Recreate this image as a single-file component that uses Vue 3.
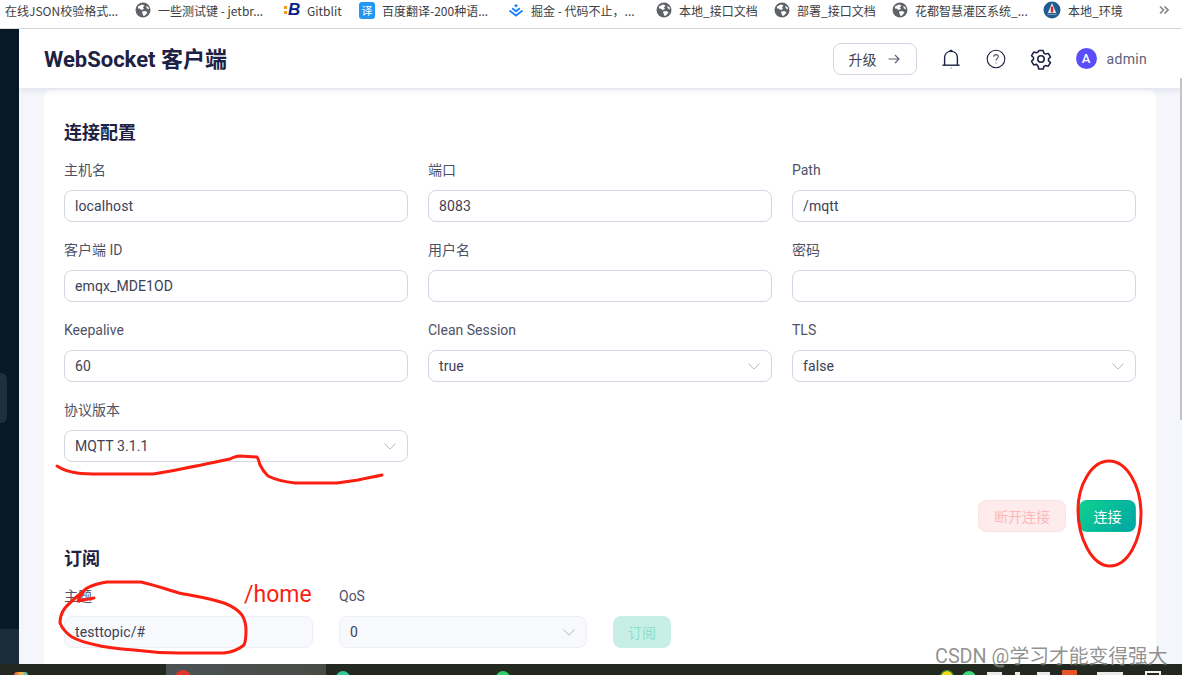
<template>
  <div class="app">
    <div class="bookmarks">
      <div v-for="b in bookmarks" :key="b.text" class="bookmark" :style="{ width: b.width + 'px' }">
        <svg v-if="b.icon === 'globe'" class="fav" viewBox="0 0 16 16">
          <circle cx="8" cy="8" r="7.5" fill="#5f6368" />
          <path d="M3 4.5 7 2.5 9.5 3.5 8 5.5 9 7 6.5 8 4.5 6.5 3 6.5Z M7 9.5 10.5 9 12.5 10.5 10 13.5 8.5 14 7.5 11.5Z M11 4 13.5 5 14 7.5 12 6.5Z" fill="#fff" />
        </svg>
        <span v-else-if="b.icon === 'gitblit'" class="fav-gitblit">
          <span class="dots"><i></i><i></i></span><b>B</b>
        </span>
        <span v-else-if="b.icon === 'fanyi'" class="fav-fanyi">译</span>
        <svg v-else-if="b.icon === 'juejin'" class="fav" viewBox="0 0 16 16">
          <path d="M8 2 10 3.7 8 5.4 6 3.7Z" fill="#1e80ff" />
          <path d="M4.2 6.2 8 9.2 11.8 6.2 M1.4 8.4 8 13.6 14.6 8.4" fill="none" stroke="#1e80ff" stroke-width="1.9" />
        </svg>
        <svg v-else-if="b.icon === 'logo'" class="fav fav-lg" viewBox="0 0 18 18">
          <circle cx="9" cy="9" r="8.5" fill="#1f5c8f" />
          <path d="M9 2 14 14H4Z" fill="#e8eef3" />
          <rect x="7.8" y="5.5" width="2.4" height="6" fill="#d92b2b" />
          <rect x="2.5" y="12" width="13" height="1.6" fill="#1f5c8f" />
        </svg>
        <span class="bookmark-text">{{ b.text }}</span>
      </div>
      <svg class="more" viewBox="0 0 10 10" fill="none" stroke="#80858a" stroke-width="1.6">
        <path d="M1 1.500 4.500 5 1 8.500M5.500 1.500 9 5 5.500 8.500" />
      </svg>
    </div>

    <div class="body">
      <aside class="sidebar">
        <div class="side-handle"></div>
        <div class="side-foot"></div>
      </aside>

      <main class="main">
        <header class="topbar">
          <h1>WebSocket 客户端</h1>
          <div class="top-actions">
            <button class="upgrade">
              升级
              <svg width="14" height="14" viewBox="0 0 14 14" fill="none" stroke="#5c6076" stroke-width="1.1">
                <path d="M1.5 7H12M8 3l4 4-4 4" />
              </svg>
            </button>
            <svg class="top-icon bell" viewBox="0 0 22 22" fill="none" stroke="#1d2143" stroke-width="1.4">
              <path d="M4.6 17V9.8C4.6 6 7.2 3.4 11 3.4S17.4 6 17.4 9.8V17" />
              <path d="M2.4 17.2H19.6" />
              <path d="M10 3.2C10 2.2 12 2.2 12 3.2" />
              <path d="M10.6 20H11.4" stroke="#6f7285" />
            </svg>
            <svg class="top-icon help" viewBox="0 0 22 22" fill="none" stroke="#1d2143" stroke-width="1.1">
              <circle cx="11" cy="11" r="8.8" />
              <path d="M8.7 8.8C8.7 7.4 9.7 6.6 11 6.6S13.3 7.5 13.3 8.7C13.3 10.4 11 10.5 11 12.6" stroke="#55586f" />
              <path d="M11 14.6V15.6" stroke="#55586f" />
            </svg>
            <svg class="top-icon gear" viewBox="0 0 24 24" fill="none" stroke="#1d2143" stroke-width="1.7" stroke-linejoin="round">
              <path d="M9.6 2.5h4.8l.7 2.9 1.9 1.1 2.9-.8 2.4 4.1-2.1 2.2v2l2.1 2.2-2.4 4.1-2.9-.8-1.9 1.1-.7 2.9H9.6l-.7-2.9L7 18l-2.9.8-2.4-4.1 2.1-2.2v-2L1.700 8.300 4.100 4.200 7 5l1.900-1.100Z" transform="translate(0 0.4) scale(1 0.96)" />
              <circle cx="12" cy="12" r="3.500" />
            </svg>
            <span class="avatar">A</span>
            <span class="username">admin</span>
          </div>
        </header>

        <section class="card">
          <h2>连接配置</h2>
          <div class="form-grid">
            <div v-for="f in connFields" :key="f.label" class="field">
              <label>{{ f.label }}</label>
              <div v-if="f.select" class="control">
                <span>{{ f.value }}</span>
                <svg class="chevron" viewBox="0 0 12 7" fill="none" stroke="#b4b6c2" stroke-width="1"><path d="M.5 .5 6 6.200 11.500 .5" /></svg>
              </div>
              <div v-else class="control"><span>{{ f.value }}</span></div>
            </div>
          </div>

          <div class="actions">
            <button class="btn btn-disconnect">断开连接</button>
            <button class="btn btn-connect">连接</button>
          </div>

          <h2 class="sub-title">订阅</h2>
          <div class="sub-row">
            <div class="field sub-topic">
              <label>主题</label>
              <div class="control soft"><span>testtopic/#</span></div>
            </div>
            <div class="field sub-qos">
              <label>QoS</label>
              <div class="control soft">
                <span>0</span>
                <svg class="chevron" viewBox="0 0 12 7" fill="none" stroke="#b4b6c2" stroke-width="1"><path d="M.5 .5 6 6.200 11.500 .5" /></svg>
              </div>
            </div>
            <button class="btn btn-subscribe">订阅</button>
          </div>
        </section>
      </main>
    </div>

    <div class="taskbar">
      <span class="task-start"></span>
      <div class="task-active"><span class="dot red"></span></div>
      <span class="dot teal"></span>
      <span class="dot green"></span>
      <div class="tray">
        <span class="dot tray-yellow"></span>
        <span class="dot tray-green"></span>
        <span class="tray-white tw-a"></span>
        <span class="tray-white tw-b"></span>
        <span class="tray-white tw-c"></span>
        <span class="tray-orange"></span>
        <span class="tray-white tw-d"></span>
        <span class="tray-box"></span>
      </div>
    </div>

    <div class="scroll-thumb"></div>

    <svg class="ink" width="1182" height="675" viewBox="0 0 1182 675" fill="none" stroke="#fb1f12" stroke-width="3" stroke-linecap="round" stroke-linejoin="round">
      <path d="M57 466C63 470 70 472 77 473C85 474 92 474 100 474L153 474C178 470 205 464 230 459C234 457 237 456 240 456L257 457C259 460 259 462 260 465C262 469 265 473 268 476C276 480 285 482 295 483L337 483C344 482 351 481 358 480C366 478 374 477 382 475" />
      <path d="M94 598 78 601C80 596 83 591 87 588C93 585 100 583 107 582L141 582C154 585 166 589 179 593C194 596 210 598 224 603C232 606 238 610 242 615C245 620 246 625 246 630C246 635 246 641 244 645C238 650 232 652 224 653L179 653C164 653 149 652 134 650C121 649 108 648 96 645C87 643 79 641 72 637C66 633 62 628 60 623C60 618 62 612 65 608C71 601 79 595 87 588" />
      <path d="M1109 461C1091 461 1078 486 1078 510C1078 538 1092 566 1110 566C1128 566 1141 540 1141 514C1141 486 1127 461 1109 461Z" />
    </svg>
    <span class="ink-text">/home</span>
    <span class="watermark">CSDN @学习才能变得强大</span>
  </div>
</template>

<script setup>
const bookmarks = [
  { text: '在线JSON校验格式...', width: 130 },
  { icon: 'globe', text: '一些测试键 - jetbr...', width: 149 },
  { icon: 'gitblit', text: 'Gitblit', width: 75 },
  { icon: 'fanyi', text: '百度翻译-200种语...', width: 149 },
  { icon: 'juejin', text: '掘金 - 代码不止，...', width: 148 },
  { icon: 'globe', text: '本地_接口文档', width: 118 },
  { icon: 'globe', text: '部署_接口文档', width: 118 },
  { icon: 'globe', text: '花都智慧灌区系统_...', width: 151 },
  { icon: 'logo', text: '本地_环境', width: 90 },
]

const connFields = [
  { label: '主机名', value: 'localhost' },
  { label: '端口', value: '8083' },
  { label: 'Path', value: '/mqtt' },
  { label: '客户端 ID', value: 'emqx_MDE1OD' },
  { label: '用户名', value: '' },
  { label: '密码', value: '' },
  { label: 'Keepalive', value: '60' },
  { label: 'Clean Session', value: 'true', select: true },
  { label: 'TLS', value: 'false', select: true },
  { label: '协议版本', value: 'MQTT 3.1.1', select: true },
]
</script>

<style>
html, body { margin: 0; overflow: hidden; }
</style>

<style scoped>
.app {
  position: relative;
  display: flex;
  flex-direction: column;
  width: 1182px;
  height: 675px;
  overflow: hidden;
  font-family: Roboto, "Noto Sans CJK SC", sans-serif;
  color: #3d4156;
}

.bookmarks {
  display: flex;
  align-items: center;
  box-sizing: border-box;
  height: 29px;
  padding: 0 0 8px 5px;
  background: #fff;
  border-bottom: 1px solid #d9dbdf;
  font-family: "Noto Sans CJK SC", sans-serif;
  font-size: 12px;
  color: #3c4043;
  flex-shrink: 0;
}
.bookmark {
  display: flex;
  align-items: center;
  gap: 7px;
  white-space: nowrap;
  flex-shrink: 0;
}
.fav { width: 16px; height: 16px; flex-shrink: 0; }
.fav-lg { width: 18px; height: 18px; }
.fav-gitblit {
  display: flex;
  align-items: center;
  width: 16px;
  height: 16px;
  font: italic 900 17px "Liberation Sans", sans-serif;
  color: #0b1f8c;
}
.dots { display: flex; flex-direction: column; gap: 2px; margin-right: 1px; }
.dots i { display: block; width: 3px; height: 3px; background: #f59a12; }
.fav-fanyi {
  width: 16px;
  height: 17px;
  line-height: 17px;
  border-radius: 3px;
  background: #2196f3;
  color: #fff;
  font-size: 11px;
  text-align: center;
}
.more { width: 10px; height: 10px; margin-left: 26px; flex-shrink: 0; }

.body { display: flex; flex: 1; min-height: 0; }

.sidebar {
  display: flex;
  flex-direction: column;
  width: 19px;
  background: #071826;
  flex-shrink: 0;
}
.side-handle {
  width: 7px;
  height: 50px;
  margin-top: 344px;
  background: #1f2f3e;
  border-radius: 0 6px 6px 0;
}
.side-foot { margin-top: auto; height: 35px; background: #1d2c3b; }

.main {
  flex: 1;
  min-width: 0;
  display: flex;
  flex-direction: column;
  background: #f5f6fb;
}

.topbar {
  position: relative;
  display: flex;
  align-items: center;
  justify-content: space-between;
  height: 59px;
  padding: 0 35px 0 25px;
  background: #fff;
  box-shadow: 0 2px 6px rgba(70, 75, 130, 0.12);
  flex-shrink: 0;
}
h1 {
  margin: 0 0 3px;
  font-size: 22px;
  font-weight: 700;
  color: #1d2143;
}
.top-actions { display: flex; align-items: center; }
.upgrade {
  display: flex;
  align-items: center;
  justify-content: center;
  gap: 10px;
  width: 84px;
  height: 32px;
  margin-right: 23px;
  background: #fff;
  border: 1px solid #d5d6e3;
  border-radius: 8px;
  font: 14px Roboto, "Noto Sans CJK SC", sans-serif;
  color: #3d4156;
}
.top-icon { width: 22px; height: 22px; flex-shrink: 0; margin-right: 23px; }
.gear { margin-right: 24px; }
.avatar {
  width: 21px;
  height: 21px;
  line-height: 21px;
  margin-right: 10px;
  border-radius: 50%;
  background: #5b4dfa;
  color: #fff;
  font-size: 13px;
  font-weight: 500;
  text-align: center;
}
.username { font-size: 14px; letter-spacing: 0.3px; color: #5c6076; }

.card {
  flex: 1;
  margin: 2px 26px 0 25px;
  padding: 30px 20px 0;
  background: #fff;
  border-radius: 8px 8px 0 0;
}
h2 {
  margin: 0 0 13px;
  font-size: 18px;
  line-height: 26px;
  font-weight: 700;
  color: #1d2143;
}
.form-grid {
  display: grid;
  grid-template-columns: repeat(3, 344px);
  column-gap: 20px;
  row-gap: 17px;
}
label {
  display: block;
  margin-bottom: 9px;
  font-size: 14px;
  line-height: 22px;
  color: #4e5267;
}
.control {
  display: flex;
  align-items: center;
  justify-content: space-between;
  box-sizing: border-box;
  height: 32px;
  padding: 0 11px 0 10px;
  background: #fff;
  border: 1px solid #d5d6e3;
  border-radius: 8px;
  font-size: 14px;
  letter-spacing: 0.1px;
  color: #3d4156;
}
.control.soft { background: #f8f9fd; border-color: #eeeff6; }
.chevron { width: 12px; height: 7px; }

.actions {
  display: flex;
  justify-content: flex-end;
  gap: 13px;
  margin-top: 38px;
}
.btn {
  box-sizing: border-box;
  height: 32px;
  padding: 0 0 1px;
  border: 1px solid transparent;
  border-radius: 8px;
  font: 14px Roboto, "Noto Sans CJK SC", sans-serif;
}
.btn-disconnect {
  width: 88px;
  background: #feeced;
  border-color: #fde2e3;
  color: #fbb9bb;
}
.btn-connect {
  width: 57px;
  background: linear-gradient(135deg, #0fd18e, #00a5a6);
  color: #fff;
}
.sub-title { margin-top: 14px; }
.sub-row { display: flex; align-items: flex-end; gap: 26px; }
.sub-topic { width: 249px; }
.sub-qos { width: 248px; }
.btn-subscribe {
  width: 58px;
  background: #c8efe6;
  color: #8adfc8;
}

.taskbar {
  display: flex;
  height: 11px;
  background: #23291f;
  overflow: hidden;
  flex-shrink: 0;
}
.task-start {
  width: 14px;
  height: 12px;
  margin: 8px 0 0 14px;
  background: linear-gradient(90deg, #f0483e, #f7c23c 50%, #2fb5d8);
  border-radius: 3px;
}
.task-active {
  width: 160px;
  margin-left: 138px;
  padding: 6px 0 0 9px;
  box-sizing: border-box;
  background: linear-gradient(90deg, #4c5154, #474c45);
}
.dot {
  display: block;
  width: 14px;
  height: 14px;
  border-radius: 50%;
  flex-shrink: 0;
}
.red { width: 16px; height: 16px; background: #e0352b; }
.teal { margin: 7px 0 0 10px; background: #36c796; }
.green { margin: 7px 0 0 146px; background: #2fd06a; }
.tray { display: flex; margin-left: 430px; }
.tray-yellow { margin-top: 6px; background: radial-gradient(#f1d91c 55%, #3e9a2a 60%); }
.tray-green { margin: 7px 0 0 8px; background: #3fd87a; }
.tray-white { height: 3px; margin-top: 8px; background: #e9e9e9; flex-shrink: 0; }
.tw-a { width: 15px; margin-left: 11px; }
.tw-b { width: 5px; margin-left: 13px; }
.tw-c { width: 13px; margin-left: 17px; }
.tw-d { width: 26px; margin-left: 20px; }
.tray-orange { width: 15px; height: 6px; margin: 6px 0 0 12px; background: #e8532a; flex-shrink: 0; }
.tray-box {
  box-sizing: border-box;
  width: 16px;
  height: 8px;
  margin: 7px 0 0 22px;
  border: 2px solid #f2f2f2;
  flex-shrink: 0;
}

.scroll-thumb {
  position: absolute;
  left: 1180px;
  top: 78px;
  width: 2px;
  height: 342px;
  background: #c4c4c8;
}

/* hand-drawn marks sitting on top of the screenshot */
.ink { position: absolute; left: 0; top: 0; pointer-events: none; }
.ink-text {
  position: absolute;
  left: 244px;
  top: 581px;
  font: 23px Roboto, sans-serif;
  color: #fb1f12;
}
.watermark {
  position: absolute;
  left: 935px;
  top: 640px;
  font: 19.8px Roboto, "Noto Sans CJK SC", sans-serif;
  color: rgba(125, 125, 125, 0.85);
  text-shadow: 0 0 2px rgba(255, 255, 255, 0.6);
  white-space: nowrap;
}
</style>
